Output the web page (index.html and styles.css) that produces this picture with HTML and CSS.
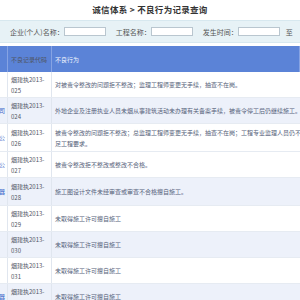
FILE: index.html
```html
<!DOCTYPE html>
<html lang="zh-CN">
<head>
  <meta charset="UTF-8">
  <title>不良行为记录查询</title>
  <link rel="stylesheet" href="styles.css">
</head>
<body>
  <div class="page">
    <div class="title">诚信体系 &gt; 不良行为记录查询</div>

    <div class="search">
      <label>企业(个人)名称：</label>
      <input type="text" class="box">
      <label class="gap">工程名称：</label>
      <input type="text" class="box">
      <label class="gap">发生时间：</label>
      <input type="text" class="box">
      <label class="to">至</label>
    </div>

    <div class="list">
      <div class="row head">
        <div class="cell unit"></div>
        <div class="cell code">不良记录代码</div>
        <div class="cell act">不良行为</div>
      </div>

      <div class="row">
        <div class="cell unit"></div>
        <div class="cell code">烟建执2013-<br>025</div>
        <div class="cell act">对被责令整改的问题拒不整改；监理工程师变更无手续，抽查不在岗。</div>
      </div>
      <div class="row alt">
        <div class="cell unit"><span class="link">司</span></div>
        <div class="cell code">烟建执2013-<br>024</div>
        <div class="cell act">外地企业及注册执业人员未烟从事建筑活动未办理有关备案手续，被责令停工后仍继续施工。</div>
      </div>
      <div class="row tall">
        <div class="cell unit"><span class="link">公</span></div>
        <div class="cell code">烟建执2013-<br>026</div>
        <div class="cell act">被责令整改的问题拒不整改；总监理工程师变更无手续，抽查不在岗；工程专业监理人员仍不足<br>足工程要求。</div>
      </div>
      <div class="row">
        <div class="cell unit"><span class="link">公</span></div>
        <div class="cell code">烟建执2013-<br>027</div>
        <div class="cell act">被责令整改拒不整改或整改不合格。</div>
      </div>
      <div class="row alt tall">
        <div class="cell unit"><span class="link">器</span></div>
        <div class="cell code">烟建执2013-<br>028</div>
        <div class="cell act">施工图设计文件未经审查或审查不合格擅自施工。</div>
      </div>
      <div class="row">
        <div class="cell unit"></div>
        <div class="cell code">烟建执2013-<br>029</div>
        <div class="cell act">未取得施工许可擅自施工</div>
      </div>
      <div class="row alt">
        <div class="cell unit"></div>
        <div class="cell code">烟建执2013-<br>030</div>
        <div class="cell act">未取得施工许可擅自施工</div>
      </div>
      <div class="row">
        <div class="cell unit"></div>
        <div class="cell code">烟建执2013-<br>031</div>
        <div class="cell act">未取得施工许可擅自施工</div>
      </div>
      <div class="row alt">
        <div class="cell unit"><span class="link">器</span></div>
        <div class="cell code">烟建执2013-<br>032</div>
        <div class="cell act">未取得施工许可擅自施工</div>
      </div>
    </div>
  </div>
</body>
</html>
```

FILE: styles.css
```css
body {
  margin: 0;
  padding: 0;
  background: #fff;
  font-family: "Noto Sans CJK SC", "Noto Sans", sans-serif;
  overflow: hidden;
}
.page {
  width: 300px;
}
.title {
  height: 20px;
  line-height: 18px;
  text-align: center;
  font-size: 8.5px;
  font-weight: bold;
  color: #333;
  letter-spacing: 0.3px;
}
.search {
  height: 23px;
  display: flex;
  align-items: center;
  padding-left: 10px;
  background: #e7f2f6;
  border-top: 1px solid #d7e8ef;
  border-bottom: 1px solid #d7e8ef;
  font-size: 7px;
  color: #555;
  white-space: nowrap;
  box-sizing: border-box;
}
.search label {
  flex: none;
}
.search .gap {
  margin-left: 10px;
}
.search .to {
  margin-left: 6px;
}
.box {
  flex: none;
  width: 42px;
  height: 9px;
  padding: 0;
  margin: 0;
  border: 1px solid #b9c6cf;
  background: #fff;
  box-sizing: border-box;
}
.list {
  margin-top: 3px;
  font-size: 6px;
  color: #56627a;
}
.row {
  display: grid;
  grid-template-columns: 8px 44px 1fr;
  min-height: 25px;
  border-bottom: 1px solid #e6ebf2;
  background: #fff;
}
.row.alt {
  background: #edf1fa;
}
.row.tall {
  min-height: 27px;
}
.row.head {
  min-height: 26px;
  background: #5b83d7;
  color: #f2f5fd;
  border-bottom: none;
}
.cell {
  display: flex;
  align-items: center;
  border-right: 1px solid #e0e6ef;
  line-height: 11px;
  white-space: nowrap;
  overflow: hidden;
}
.head .cell {
  border-right: 1px solid #86a3e3;
}
.unit {
  justify-content: flex-end;
}
.unit span {
  flex: none;
  margin-right: 2px;
}
.link {
  color: #3b67c9;
}
.code {
  padding-left: 3px;
  color: #4f5563;
}
.act {
  padding-left: 3px;
  border-right: none;
}
```
